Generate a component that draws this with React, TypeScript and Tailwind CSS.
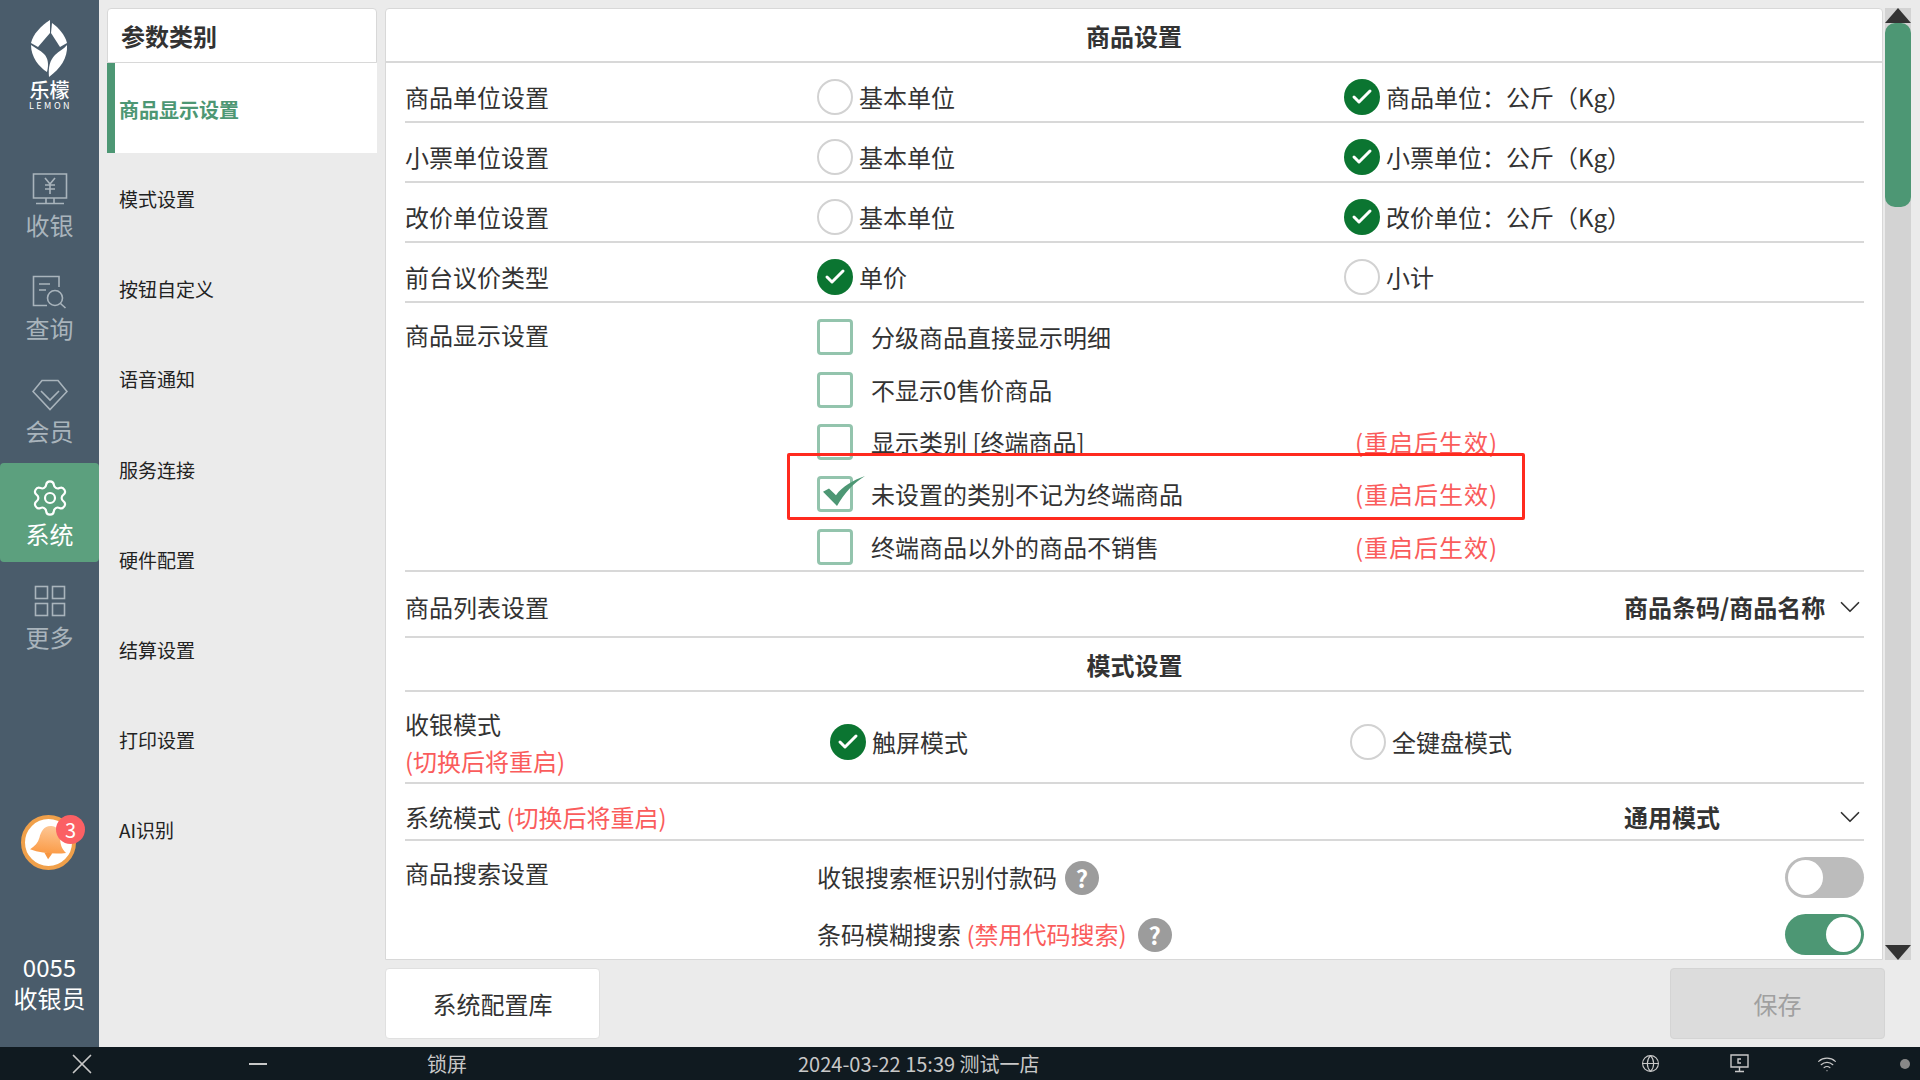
import { Check, ChevronDown, Globe, Settings, Wifi, X } from 'lucide-react'
import type { ReactNode } from 'react'

const FONT = 'font-["Noto_Sans_CJK_SC","Noto_Sans",sans-serif]'

const categories = ['模式设置', '按钮自定义', '语音通知', '服务连接', '硬件配置', '结算设置', '打印设置', 'AI识别']

function Logo() {
  return (
    <div className="flex flex-col items-center h-[154px] pt-5 text-white">
      <svg width="37" height="57" viewBox="0 0 37 57" fill="#fff" className="shrink-0">
        <path d="M19 0C10 6 2 14 0 23L7 27L19 13Z" />
        <path d="M21 3C28 8 34 15 36 23L29 27L20 13Z" />
        <path d="M0 25C0 37 8 47 16 52C18 44 17 38 13 34C9 30 4 28 0 25Z" />
        <path d="M36 25C37 38 29 49 18 57C17 47 19 40 24 35C28 31 33 29 36 25Z" />
      </svg>
      <span className="text-[20px] leading-[22px] mt-0.5 font-medium">乐檬</span>
      <span className="text-[9px] leading-[10px] tracking-[2.500px] pl-[2px]">LEMON</span>
    </div>
  )
}

function NavIcon({ name }: { name: string }) {
  const stroke = '#a9b4bc'
  if (name === '收银')
    return (
      <svg width="36" height="32" viewBox="0 0 36 32" fill="none" stroke={stroke} strokeWidth="1.6">
        <path d="M1.500 1h33v24h-33zM14 25v5M22 25v5M4 30.500h28" />
        <path d="M13 5l5 6 5-6M13 12h10M13 16h10M18 11v10" />
      </svg>
    )
  if (name === '查询')
    return (
      <svg width="36" height="34" viewBox="0 0 36 34" fill="none" stroke={stroke} strokeWidth="1.6">
        <path d="M27 12V1.500H1.500v29H15M7 9h11M7 15h7" />
        <circle cx="23" cy="23" r="7.500" />
        <path d="M28.500 28.500l5 4.500" />
      </svg>
    )
  if (name === '会员')
    return (
      <svg width="36" height="32" viewBox="0 0 36 32" fill="none" stroke={stroke} strokeWidth="1.6">
        <path d="M10 1.500h16l9 11-17 18-17-18z" />
        <path d="M9 12l9 9 9-9" />
      </svg>
    )
  if (name === '系统') return <Settings size={40} color="#fff" strokeWidth={1.3} />
  return (
    <svg width="32" height="32" viewBox="0 0 32 32" fill="none" stroke={stroke} strokeWidth="1.6">
      <rect x="1.500" y="1.500" width="12" height="12" />
      <rect x="18.500" y="1.500" width="12" height="12" />
      <rect x="1.500" y="18.500" width="12" height="12" />
      <rect x="18.500" y="18.500" width="12" height="12" />
    </svg>
  )
}

function NavItem({ name }: { name: string }) {
  const active = name === '系统'
  return (
    <div
      className={`h-[99px] mb-1 pt-[7px] flex flex-col items-center justify-center rounded ${
        active ? 'bg-[#5ca07e] text-white' : 'text-[#a9b4bc]'
      }`}
    >
      <div className="h-[36px] flex items-center">
        <NavIcon name={name} />
      </div>
      <span className="text-[24px] leading-[36px]">{name}</span>
    </div>
  )
}

function Bell() {
  return (
    <svg width="40" height="38" viewBox="0 0 44 42">
      <defs>
        <linearGradient id="bellFill" x1="0" y1="0" x2="0" y2="1">
          <stop offset="0" stopColor="#fdc796" />
          <stop offset="1" stopColor="#fb9c48" />
        </linearGradient>
      </defs>
      <g transform="rotate(6 22 20)">
        <path d="M23 2c-8 0-11 7-12 14-1 6-4 10-9 14 12 3 28 3 40 0-5-4-7-8-8-14-1-7-3-14-11-14z" fill="url(#bellFill)" />
        <path d="M18 32h9l-4 7z" fill="#f79640" />
      </g>
    </svg>
  )
}

function Sidebar() {
  return (
    <div className="w-[99px] h-full bg-[#4a5c6b] flex flex-col">
      <Logo />
      {['收银', '查询', '会员', '系统', '更多'].map(n => (
        <NavItem key={n} name={n} />
      ))}
      <div className="relative w-[55px] h-[55px] ml-[21px] mt-[146px] rounded-full bg-white border-[4px] border-[#f0a04a] flex items-center justify-center">
        <Bell />
        <span className="absolute -top-[4px] left-[31px] w-[29px] h-[29px] rounded-full bg-[#fb6064] text-white text-[20px] leading-[29px] text-center">
          3
        </span>
      </div>
      <div className="mt-[81px] flex flex-col items-center text-white text-[24px] leading-[31px]">
        <span>0055</span>
        <span>收银员</span>
      </div>
    </div>
  )
}

function CategoryPanel() {
  return (
    <div className="w-[270px] ml-2 pt-2 shrink-0">
      <div className="h-[55px] bg-white rounded-t border border-[#d8d8d8] pl-[13px] flex items-center text-[24px] font-bold text-[#333]">
        参数类别
      </div>
      <div className="h-[90px] bg-white border-l-[8px] border-[#4d9774] pl-1 pt-1 flex items-center text-[20px] font-bold text-[#4d9774]">
        商品显示设置
      </div>
      {categories.map(c => (
        <div key={c} className="h-[90.100px] pl-3 pt-[3px] flex items-center text-[19px] text-[#222]">
          {c}
        </div>
      ))}
    </div>
  )
}

function Radio({ checked, label, className = '' }: { checked: boolean; label: string; className?: string }) {
  return (
    <div className={`flex items-center gap-1.5 ${className}`}>
      {checked ? (
        <span className="w-9 h-9 rounded-full bg-[#0b7531] flex items-center justify-center">
          <Check size={24} color="#fff" strokeWidth={3} />
        </span>
      ) : (
        <span className="w-9 h-9 rounded-full bg-white border-2 border-[#d2d2d2]" />
      )}
      <span>{label}</span>
    </div>
  )
}

function UnitRow({ title, left, right, leftOn }: { title: string; left: string; right: string; leftOn: boolean }) {
  return (
    <div className="h-[60px] border-b-2 border-[#d8d8d8] flex items-center pt-[10px]">
      <span className="w-[412px]">{title}</span>
      <Radio checked={leftOn} label={left} className="w-[527px]" />
      <Radio checked={!leftOn} label={right} />
    </div>
  )
}

function CheckRow({ label, note, checked }: { label: string; note?: boolean; checked?: boolean }) {
  return (
    <div className="relative h-[52.400px] flex items-center">
      <span className="w-9 h-9 rounded-[4px] border-[3px] border-[#93c4ad] shrink-0" />
      {checked && (
        <svg
          className="absolute left-[6px] top-[8px]"
          width="42"
          height="30"
          viewBox="0 0 42 36"
          preserveAspectRatio="none"
          fill="#4d9774"
        >
          <path d="M0 19l6-4 7 8C19 13 30 5 42 0 31 8 21 21 14 36z" />
        </svg>
      )}
      <span className="ml-[18px] w-[484px]">{label}</span>
      {note && <span className="text-[#fa5c5c] tracking-[1px]">(重启后生效)</span>}
    </div>
  )
}

function SelectRow({ title, value, height, offset }: { title: ReactNode; value: string; height: string; offset: string }) {
  return (
    <div className={`${height} ${offset} border-b-2 border-[#d8d8d8] flex items-center`}>
      <span className="flex-1">{title}</span>
      <span className="w-[240px] flex items-center justify-between font-bold">
        {value}
        <ChevronDown size={34} strokeWidth={1.2} className="-mr-[3px]" />
      </span>
    </div>
  )
}

function Toggle({ on }: { on: boolean }) {
  return (
    <span
      className={`w-[79px] h-[41px] rounded-full p-[3px] flex ${
        on ? 'bg-[#4d9774] justify-end' : 'bg-[#bcbcbc] justify-start'
      }`}
    >
      <span className="w-[35px] h-[35px] rounded-full bg-white" />
    </span>
  )
}

function Help() {
  return (
    <span className="w-[34px] h-[34px] rounded-full bg-[#9c9c9c] text-white text-[24px] font-bold flex items-center justify-center">
      ?
    </span>
  )
}

function SettingsPanel() {
  return (
    <div className="flex-1 h-[952px] bg-white rounded-t border border-[#d8d8d8] pl-[19px] pr-[18px] text-[24px] text-[#333] overflow-hidden">
      <div className="-ml-[19px] -mr-[18px] h-[54px] pt-[2px] border-b-2 border-[#d8d8d8] flex items-center justify-center font-bold">
        商品设置
      </div>
      <UnitRow title="商品单位设置" left="基本单位" right="商品单位：公斤（Kg）" leftOn={false} />
      <UnitRow title="小票单位设置" left="基本单位" right="小票单位：公斤（Kg）" leftOn={false} />
      <UnitRow title="改价单位设置" left="基本单位" right="改价单位：公斤（Kg）" leftOn={false} />
      <UnitRow title="前台议价类型" left="单价" right="小计" leftOn={true} />
      <div className="flex h-[269px] border-b-2 border-[#d8d8d8]">
        <span className="w-[412px] pt-[14px]">商品显示设置</span>
        <div className="pt-2">
          <CheckRow label="分级商品直接显示明细" />
          <CheckRow label="不显示0售价商品" />
          <CheckRow label="显示类别 [终端商品]" note />
          <CheckRow label="未设置的类别不记为终端商品" note checked />
          <CheckRow label="终端商品以外的商品不销售" note />
        </div>
      </div>
      <SelectRow title="商品列表设置" value="商品条码/商品名称" height="h-[66px]" offset="pt-[6px]" />
      <div className="h-[54px] pt-0.5 border-b-2 border-[#d8d8d8] flex items-center justify-center font-bold">模式设置</div>
      <div className="h-[92px] pt-[10px] border-b-2 border-[#d8d8d8] flex items-center">
        <div className="w-[425px] leading-[37px]">
          <div>收银模式</div>
          <div className="text-[#fa5c5c]">(切换后将重启)</div>
        </div>
        <Radio checked label="触屏模式" className="w-[520px]" />
        <Radio checked={false} label="全键盘模式" />
      </div>
      <SelectRow
        title={
          <>
            系统模式 <span className="text-[#fa5c5c]">(切换后将重启)</span>
          </>
        }
        value="通用模式"
        height="h-[57px]"
        offset="pt-[11px]"
      />
      <div className="flex pt-4">
        <span className="w-[412px] -mt-[2px]">商品搜索设置</span>
        <div className="flex-1 flex flex-col gap-4">
          <div className="flex items-center h-[41px]">
            <span className="-mt-[2px]">收银搜索框识别付款码</span>
            <span className="ml-2">
              <Help />
            </span>
            <span className="ml-auto">
              <Toggle on={false} />
            </span>
          </div>
          <div className="flex items-center h-[41px]">
            <span className="-mt-[2px]">
              条码模糊搜索 <span className="text-[#fa5c5c]">(禁用代码搜索)</span>
            </span>
            <span className="ml-[11px]">
              <Help />
            </span>
            <span className="ml-auto">
              <Toggle on={true} />
            </span>
          </div>
        </div>
      </div>
    </div>
  )
}

function Scrollbar() {
  return (
    <div className="w-[26px] h-[952px] ml-0.5 bg-[#d3d3d3] flex flex-col">
      <div className="h-[15px] bg-[#333] [clip-path:polygon(50%_0,100%_100%,0_100%)]" />
      <div className="h-[184px] bg-[#4d9774] rounded-[10px]" />
      <div className="flex-1" />
      <div className="h-[15px] bg-[#333] [clip-path:polygon(0_0,100%_0,50%_100%)]" />
    </div>
  )
}

function Taskbar() {
  return (
    <div className="h-[33px] bg-[#101a20] flex items-center text-[#c8c8c8] text-[20px]">
      <X size={34} className="ml-[65px]" strokeWidth={1.2} />
      <span className="w-[18px] h-0.5 bg-[#c8c8c8] ml-[150px]" />
      <span className="ml-[160px]">锁屏</span>
      <span className="ml-[331px]">2024-03-22 15:39 测试一店</span>
      <Globe size={19} className="ml-[601px]" strokeWidth={1.4} />
      <svg className="ml-[70px]" width="19" height="19" viewBox="0 0 19 19" fill="none" stroke="#c8c8c8" strokeWidth="1.4">
        <path d="M1 1h17v12H1zM9.500 13v4M5 17.500h9M11 5H8v4h3" />
      </svg>
      <Wifi size={20} className="ml-[68px]" strokeWidth={1.4} />
      <span className="w-[10px] h-[10px] rounded-full bg-[#888] ml-[63px]" />
    </div>
  )
}

export default function App() {
  return (
    <div className={`w-[1920px] h-[1080px] flex flex-col bg-[#ebebeb] overflow-hidden ${FONT}`}>
      <div className="flex h-[1047px]">
        <Sidebar />
        <CategoryPanel />
        <div className="flex-1 ml-2 pt-2 pr-[9px] flex flex-col relative">
          <div className="flex">
            <SettingsPanel />
            <Scrollbar />
          </div>
          <div className="flex justify-between mt-2 pr-[26px]">
            <button className="w-[215px] h-[71px] bg-white rounded border border-[#e0e0e0] text-[24px] text-[#333]">
              系统配置库
            </button>
            <button className="w-[215px] h-[71px] bg-[#dcdcdc] rounded border border-[#d4d4d4] text-[24px] text-[#a0a0a0]">
              保存
            </button>
          </div>
          {/* red highlight drawn over the screenshot */}
          <div className="absolute left-[402px] top-[453px] w-[738px] h-[67px] border-[3px] border-[#ff2a1f] rounded-[2px] pointer-events-none" />
        </div>
      </div>
      <Taskbar />
    </div>
  )
}
